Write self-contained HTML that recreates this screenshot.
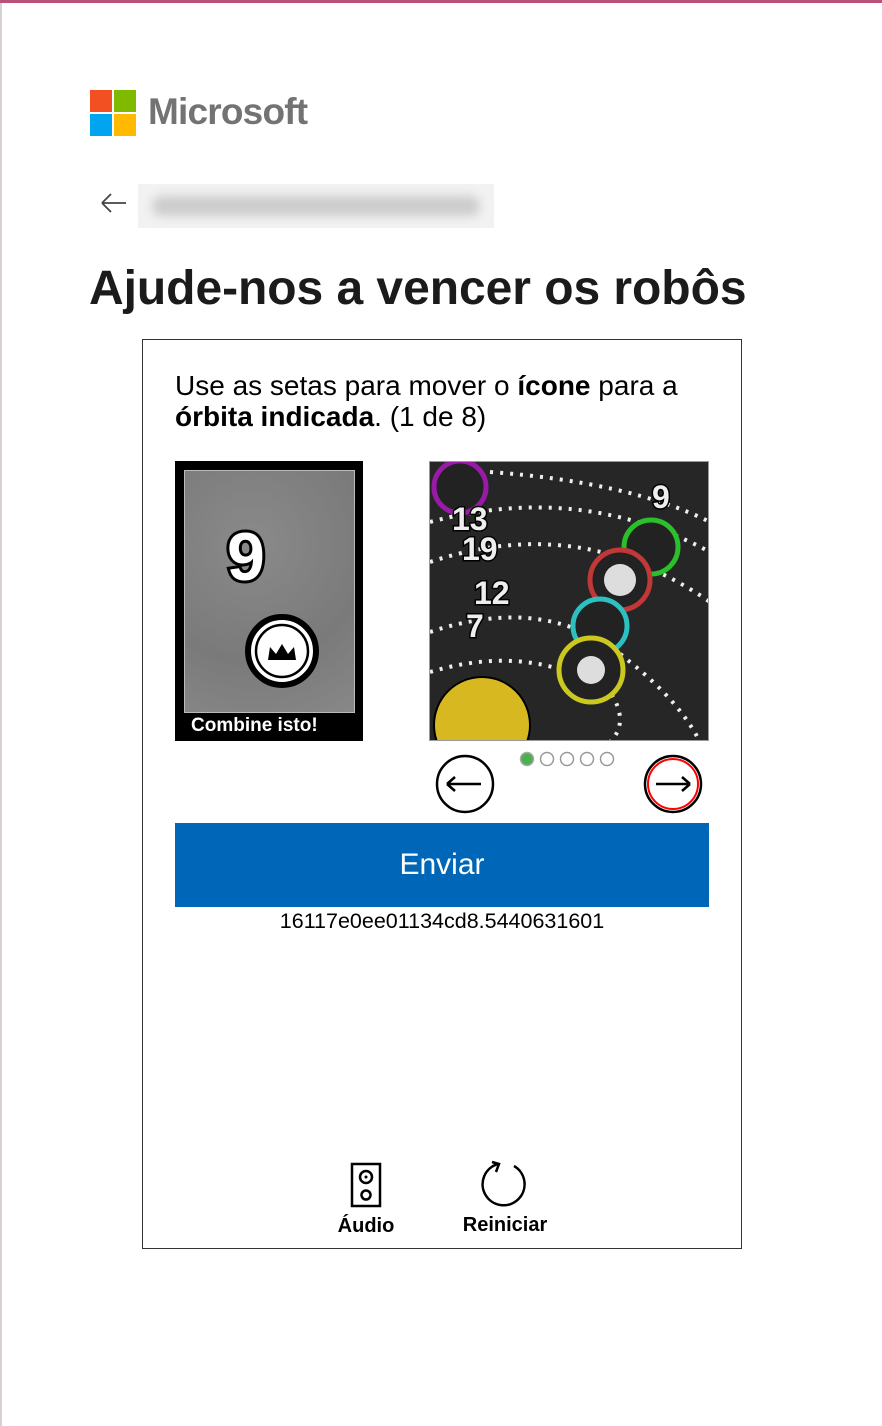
<!DOCTYPE html>
<html><head><meta charset="utf-8"><style>
*{margin:0;padding:0;box-sizing:border-box}
html,body{width:882px;height:1426px;background:#fff;overflow:hidden;font-family:"Liberation Sans",sans-serif;color:#1b1b1b}
.topbar{position:absolute;left:0;top:0;width:882px;height:3px;background:#b8527a}
.leftbar{position:absolute;left:0;top:3px;width:2px;height:1423px;background:#d8d0d0}
.abs{position:absolute}
</style></head><body>
<div class="topbar"></div><div class="leftbar"></div>
<div class="abs" style="left:90px;top:90px;width:22px;height:22px;background:#f25022"></div>
<div class="abs" style="left:114px;top:90px;width:22px;height:22px;background:#7fba00"></div>
<div class="abs" style="left:90px;top:114px;width:22px;height:22px;background:#00a4ef"></div>
<div class="abs" style="left:114px;top:114px;width:22px;height:22px;background:#ffb900"></div>
<div class="abs" style="left:148px;top:92px;font-size:37px;color:#737373;font-weight:bold;letter-spacing:-0.8px;line-height:40px">Microsoft</div>
<svg class="abs" style="left:100px;top:192px" width="28" height="22"><path d="M2 11H26M2 11L11 2M2 11L11 20" stroke="#444" stroke-width="1.8" fill="none"/></svg>
<div class="abs" style="left:138px;top:184px;width:356px;height:44px;background:#f2f2f2"><div style="margin:12px 14px;height:20px;border-radius:10px;background:#ccc;filter:blur(5px)"></div></div>
<div class="abs" style="left:89px;top:262px;font-size:48px;font-weight:bold;color:#1b1b1b;line-height:54px;letter-spacing:-0.05px;white-space:nowrap">Ajude-nos a vencer os robôs</div>
<div class="abs" style="left:142px;top:339px;width:600px;height:910px;border:1px solid #333"></div>
<div class="abs" style="left:175px;top:370px;font-size:28px;line-height:31px;color:#000;width:535px">Use as setas para mover o <b>ícone</b> para a <b>órbita indicada</b>. (1 de 8)</div>
<div class="abs" style="left:175px;top:461px;width:188px;height:280px;background:#000"></div>
<div class="abs" style="left:184px;top:470px;width:171px;height:243px;background:radial-gradient(circle at 40% 30%,#8a8a8a,#7a7a7a 60%,#888);border:1px solid #bbb"></div>
<svg class="abs" style="left:215px;top:510px" width="80" height="80"><text x="12" y="70" font-family="Liberation Sans" font-weight="bold" font-size="68" fill="#fff" stroke="#000" stroke-width="6" paint-order="stroke">9</text></svg>
<svg class="abs" style="left:243px;top:612px" width="78" height="78"><circle cx="39" cy="39" r="34" fill="#fff" stroke="#000" stroke-width="6"/><circle cx="39" cy="39" r="26" fill="none" stroke="#000" stroke-width="2.5"/><path d="M25 48L27 35L33 42L39 32L45 42L51 35L53 48Z" fill="#000"/></svg>
<div class="abs" style="left:191px;top:714px;font-size:19px;font-weight:bold;color:#fff;line-height:24px">Combine isto!</div>
<div class="abs" style="left:429px;top:461px;width:280px;height:280px;background:#262626;border:1px solid #999;overflow:hidden">
<svg width="280" height="280">
<g fill="none" stroke="#eee" stroke-width="4" stroke-dasharray="3 7">
<path d="M0 60Q150 20 280 90"/><path d="M0 100Q150 50 280 140"/><path d="M0 170Q120 130 200 200 250 240 270 280"/><path d="M0 210Q100 180 180 230 200 260 180 280"/><path d="M60 10Q200 20 280 60"/></g>
<circle cx="30" cy="25" r="26" fill="#222" stroke="#9a1aa8" stroke-width="5"/>
<circle cx="221" cy="85" r="27" fill="#222" stroke="#2bbf2b" stroke-width="5"/>
<circle cx="190" cy="118" r="30" fill="#222" stroke="#c03838" stroke-width="5"/><circle cx="190" cy="118" r="16" fill="#ddd"/>
<circle cx="170" cy="164" r="27" fill="#222" stroke="#2cc0c0" stroke-width="5"/>
<circle cx="161" cy="208" r="32" fill="#222" stroke="#cbc820" stroke-width="5"/><circle cx="161" cy="208" r="14" fill="#ddd"/>
<circle cx="52" cy="263" r="48" fill="#d8b820" stroke="#000" stroke-width="2"/>
<g fill="#eee" stroke="#000" stroke-width="3" paint-order="stroke" font-family="Liberation Sans" font-weight="bold" font-size="32"><text x="22" y="68">13</text><text x="32" y="98">19</text><text x="44" y="142">12</text><text x="36" y="175">7</text><text x="222" y="46">9</text></g>
</svg></div>
<svg class="abs" style="left:518px;top:750px" width="100" height="18"><circle cx="9" cy="9" r="6.5" fill="#4caf50" stroke="#aaa" stroke-width="1.5"/><circle cx="29" cy="9" r="6.5" fill="#fff" stroke="#999" stroke-width="1.5"/><circle cx="49" cy="9" r="6.5" fill="#fff" stroke="#999" stroke-width="1.5"/><circle cx="69" cy="9" r="6.5" fill="#fff" stroke="#999" stroke-width="1.5"/><circle cx="89" cy="9" r="6.5" fill="#fff" stroke="#999" stroke-width="1.5"/></svg>
<svg class="abs" style="left:434px;top:753px" width="62" height="62"><circle cx="31" cy="31" r="28" fill="#fff" stroke="#000" stroke-width="2.5"/><path d="M13 31H47M13 31L21 24M13 31L21 38" stroke="#000" stroke-width="2.5" fill="none"/></svg>
<svg class="abs" style="left:642px;top:753px" width="62" height="62"><circle cx="31" cy="31" r="28" fill="#fff" stroke="#000" stroke-width="2.5"/><circle cx="31" cy="31" r="25" fill="none" stroke="#f00" stroke-width="2"/><path d="M14 31H48M48 31L40 24M48 31L40 38" stroke="#000" stroke-width="2.5" fill="none"/></svg>
<div class="abs" style="left:175px;top:823px;width:534px;height:84px;background:#0067b8;color:#fff;font-size:30px;text-align:center;line-height:84px">Enviar</div>
<div class="abs" style="left:175px;top:909px;width:534px;text-align:center;font-size:21.5px;color:#000;line-height:24px">16117e0ee01134cd8.5440631601</div>
<svg class="abs" style="left:350px;top:1162px" width="32" height="46"><rect x="2" y="2" width="28" height="42" fill="none" stroke="#000" stroke-width="2.5"/><circle cx="16" cy="15" r="6" fill="none" stroke="#000" stroke-width="2.5"/><circle cx="16" cy="15" r="1.5" fill="#000"/><circle cx="16" cy="33" r="4.5" fill="none" stroke="#000" stroke-width="2.5"/></svg>
<div class="abs" style="left:325px;top:1215px;width:82px;text-align:center;font-size:20px;font-weight:bold;color:#000">Áudio</div>
<svg class="abs" style="left:478px;top:1158px" width="54" height="52"><path d="M20 6A21 21 0 1 0 36 8" fill="none" stroke="#000" stroke-width="2.5"/><path d="M14 4L21 6L18 14" fill="none" stroke="#000" stroke-width="2.5"/></svg>
<div class="abs" style="left:450px;top:1214px;width:110px;text-align:center;font-size:20px;font-weight:bold;color:#000">Reiniciar</div>
</body></html>
